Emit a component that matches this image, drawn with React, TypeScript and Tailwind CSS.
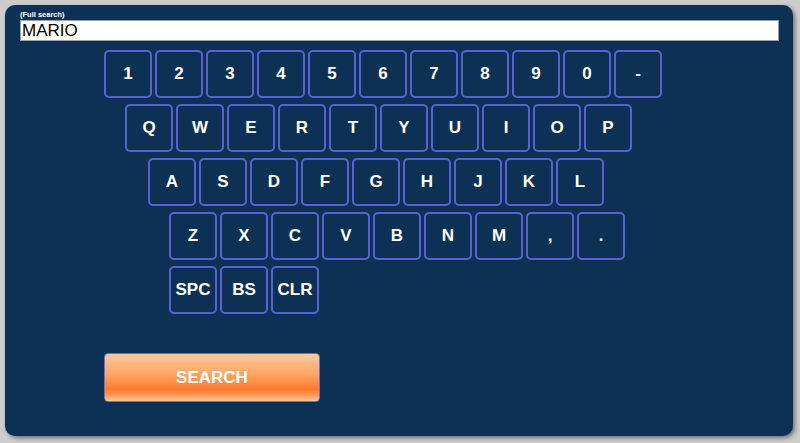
import React from "react";

const rows: { keys: string[]; ml: string }[] = [
  { keys: ["1", "2", "3", "4", "5", "6", "7", "8", "9", "0", "-"], ml: "ml-[84px]" },
  { keys: ["Q", "W", "E", "R", "T", "Y", "U", "I", "O", "P"], ml: "ml-[105px]" },
  { keys: ["A", "S", "D", "F", "G", "H", "J", "K", "L"], ml: "ml-[128px]" },
  { keys: ["Z", "X", "C", "V", "B", "N", "M", ",", "."], ml: "ml-[149px]" },
  { keys: ["SPC", "BS", "CLR"], ml: "ml-[149px]" },
];

export default function App() {
  return (
    <div
      className="w-[800px] h-[443px] bg-[#cdcdcd] p-[5px] box-border"
      style={{ fontFamily: '"Liberation Sans", Arial, sans-serif' }}
    >
      <div className="w-[788px] h-[431px] rounded-[10px] bg-[#0d3155] shadow-[2px_2px_4px_rgba(0,0,0,0.45)] pl-[15px] pr-[14px] pt-[4px] flex flex-col">
        <div className="text-[7.5px] leading-[9px] font-bold text-white h-[11px] flex items-end pb-[1px]">
          (Full search)
        </div>
        <div className="h-[21px] bg-white border border-[#9aa0a8] flex items-center pl-[1px] text-[17px] leading-none text-black">
          MARIO
        </div>
        <div className="flex flex-col gap-[6px] mt-[9px]">
          {rows.map((r, i) => (
            <div key={i} className={`flex gap-[3px] ${r.ml}`}>
              {r.keys.map((k) => (
                <div
                  key={k}
                  className="w-[48px] h-[48px] rounded-[5px] border-2 border-[#5563d0] flex items-center justify-center text-white font-bold text-[17px]"
                >
                  {k}
                </div>
              ))}
            </div>
          ))}
        </div>
        <div className="ml-[84px] mt-[39px] w-[216px] h-[49px] rounded-[4px] border border-[#6a6fd8] bg-[linear-gradient(to_bottom,#ffcaa0_0%,#ffa868_40%,#ff7b2e_75%,#ff9a58_88%,#ffc8a0_100%)] flex items-center justify-center text-white font-bold text-[17px]">
          SEARCH
        </div>
      </div>
    </div>
  );
}
